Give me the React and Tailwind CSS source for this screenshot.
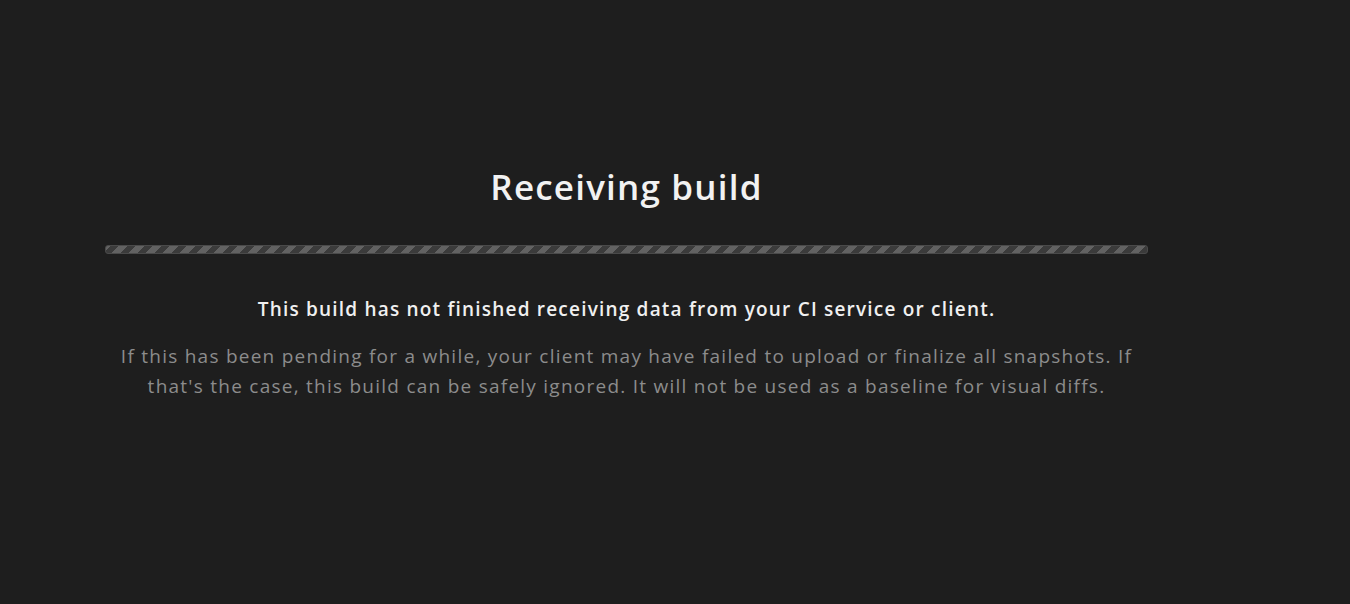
export default function App() {
  return (
    <div className="min-h-[604px] w-full bg-[#1e1e1e] font-['Open_Sans','Noto_Sans',sans-serif]">
      <div className="ml-[105px] w-[1043px] pt-[164px] text-center">
        <h1 className="text-[35px] font-semibold leading-[46px] tracking-[1.2px] text-[#f2f2f2]">Receiving build</h1>

        <div className="mt-[35px] h-[9px] rounded-[3px] border border-[#4a4a4a] bg-[#3a3a3a] bg-[repeating-linear-gradient(-45deg,#3b3b3b_0px,#3b3b3b_6px,#626262_6px,#626262_12px)]" />

        <p className="mt-[41px] text-[19px] font-semibold leading-[28px] tracking-[1.2px] text-[#f0f0f0]">
          This build has not finished receiving data from your CI service or client.
        </p>
        <p className="mx-auto mt-[18px] whitespace-nowrap text-[19px] leading-[30px] tracking-[1.25px] text-[#8c8c8c]">
          If this has been pending for a while, your client may have failed to upload or finalize all snapshots. If
          <br />
          that's the case, this build can be safely ignored. It will not be used as a baseline for visual diffs.
        </p>
      </div>
    </div>
  );
}
